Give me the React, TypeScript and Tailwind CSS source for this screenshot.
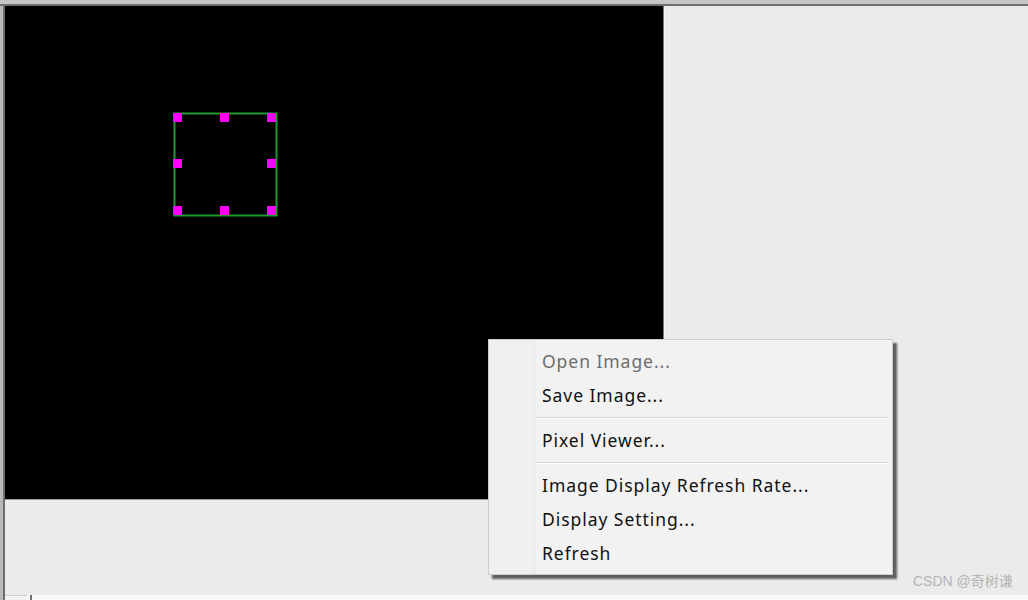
import React from 'react';

const menuFont = { fontFamily: '"Noto Sans", "Open Sans", sans-serif' };

type Item = { label: string; disabled?: boolean } | 'sep';

const items: Item[] = [
  { label: 'Open Image...', disabled: true },
  { label: 'Save Image...' },
  'sep',
  { label: 'Pixel Viewer...' },
  'sep',
  { label: 'Image Display Refresh Rate...' },
  { label: 'Display Setting...' },
  { label: 'Refresh' },
];

function Handle({ x, y }: { x: number; y: number }) {
  return <rect x={x} y={y} width={9} height={9} fill="#ff00ff" />;
}

export default function App() {
  return (
    <div className="relative w-[1028px] h-[600px] overflow-hidden bg-[#ebebeb] flex flex-col">
      {/* top frame */}
      <div className="h-[4px] bg-[#c6c6c6]" />
      <div className="h-[2px] bg-[#6f6f6f]" />

      <div className="flex flex-1">
        {/* left frame */}
        <div className="w-[3px] bg-[#b9b9b9]" />
        <div className="w-[2px] bg-[#6f6f6f]" />

        <div className="flex flex-col flex-1">
          <div className="flex">
            {/* image canvas */}
            <div className="relative w-[658px] h-[493px] bg-black">
              <svg className="absolute left-0 top-0" width="658" height="493">
                <rect x={169.5} y={107.5} width={102} height={102} fill="none" stroke="#1a9a2c" strokeWidth={2} />
                <Handle x={168} y={107} />
                <Handle x={215} y={107} />
                <Handle x={262} y={107} />
                <Handle x={168} y={153} />
                <Handle x={262} y={153} />
                <Handle x={168} y={200} />
                <Handle x={215} y={200} />
                <Handle x={262} y={200} />
              </svg>
            </div>
            <div className="w-[1px] bg-[#7a7a7a]" />
            <div className="w-[1px] bg-[#f4f4f4]" />
            <div className="flex-1 bg-[#ebebeb]" />
          </div>
          <div className="h-[1px] bg-[#9a9a9a] w-[658px]" />
          <div className="flex-1 bg-[#ebebeb]" />
          {/* status strip */}
          <div className="h-[5px] flex bg-[#f9f9f9]">
            <div className="w-[22px] bg-[#f2f2f2] border-t border-[#cfcfcf]" />
            <div className="ml-[3px] w-[2px] bg-[#6f6f6f]" />
          </div>
        </div>
      </div>

      {/* context menu */}
      <div
        className="absolute left-[488px] top-[339px] w-[405px] bg-[#f2f2f2] border border-[#cdcdcd] shadow-[4px_4px_2px_rgba(0,0,0,0.6)] flex py-[4px]"
        style={menuFont}
      >
        <div className="absolute left-0 top-0 bottom-0 w-[46px] bg-[#f0f0f0] border-r border-[#e6e6e6]" />
        <div className="relative flex flex-col w-full">
          {items.map((it, i) =>
            it === 'sep' ? (
              <div key={i} className="h-[11px] flex items-center pl-[47px] pr-[3px]">
                <div className="w-full h-[2px] border-t border-[#d6d6d6] border-b-white border-b" />
              </div>
            ) : (
              <div
                key={i}
                className={`h-[34px] flex items-center pl-[53px] text-[17.5px] tracking-[0.95px] ${
                  it.disabled ? 'text-[#6d6d6d]' : 'text-[#111111]'
                }`}
              >
                {it.label}
              </div>
            )
          )}
        </div>
      </div>

      {/* watermark */}
      <div
        className="absolute left-[913px] top-[571px] text-[14px] text-[#b4b4b4]"
        style={{ fontFamily: '"Liberation Sans", "Noto Sans CJK SC", sans-serif' }}
      >
        CSDN @奇树谦
      </div>
    </div>
  );
}
